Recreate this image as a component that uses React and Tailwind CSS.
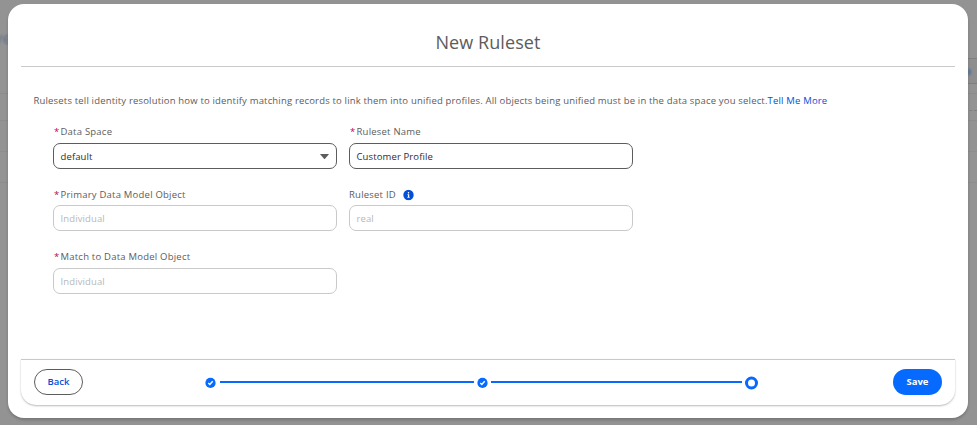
import React from "react";

const CheckDot = () => (
  <svg className="size-[11px] shrink-0" viewBox="0 0 11 11">
    <circle cx="5.5" cy="5.9" r="5.1" fill="#066afe" />
    <path d="M3.3 6l1.5 1.5 2.9-3.3" fill="none" stroke="#fff" strokeWidth="1.5" />
  </svg>
);

const InfoIcon = () => (
  <svg className="ml-[7.5px] size-[11px] shrink-0 translate-y-[0.5px]" viewBox="0 0 11 11">
    <circle cx="5.5" cy="5.5" r="5.2" fill="#0250d9" />
    <rect x="4.8" y="2.6" width="1.4" height="1.3" rx=".4" fill="#fff" />
    <path d="M4.5 4.8h1.7v2.6h.5v.8H4.4v-.8h.5V5.6h-.4z" fill="#fff" />
  </svg>
);

function Field({ label, value, required, select, disabled, info }) {
  return (
    <div className="flex w-[284px] flex-col">
      <div
        className={`flex h-[17px] items-center text-[9.5px] leading-[14px] tracking-[0.22px] text-[#5c5c5c] ${
          disabled ? "pt-[1.5px]" : ""
        }`}
      >
        {required && <span className="ml-[1px] w-[6.5px] text-[#b60554]">*</span>}
        <span>{label}</span>
        {info && <InfoIcon />}
      </div>
      <div
        className={`mt-[3px] flex h-[26px] items-center justify-between rounded-[7px] border pr-[7px] pl-[6.5px] text-[9.5px] leading-[14px] tracking-[0.12px] ${
          disabled ? "border-[#c9c9c9] text-[#b8b8b8]" : "border-[#5c5c5c] text-[#2e2e2e]"
        }`}
      >
        <span className="pt-[2px]">{value}</span>
        {select && (
          <svg className="h-[5px] w-[9px]" viewBox="0 0 9 5">
            <path d="M.6 0h7.8q.8 0 .3.6L5 4.7q-.5.5-1 0L.3.6Q-.2 0 .6 0z" fill="#5c5c5c" />
          </svg>
        )}
      </div>
    </div>
  );
}

export default function App() {
  return (
    <div className="relative h-[425px] w-[977px] overflow-hidden bg-[#939393] font-['Open_Sans','Noto_Sans',sans-serif]">
      {/* Dimmed page behind the dialog */}
      <div className="absolute inset-x-0 top-[93px] h-[90px] border-y border-[#8c8c8c]">
        <div className="mt-[26px] h-[32px] border-y border-[#8c8c8c]" />
      </div>
      <span className="absolute top-[26px] -left-[6px] text-[17px] leading-6 text-[#637286] blur-[1px]">ve</span>
      <div className="absolute top-[58px] right-0 h-[26px] w-5 border-y border-[#7f7f7f] bg-[#8e8e8e]" />
      <div className="absolute top-[69px] right-[6px] h-[6px] w-[3px] bg-[#5a749e] blur-[1px]" />
      <div className="absolute top-[110px] right-0 w-3 border-t border-dashed border-[#7f7f7f]" />

      <main className="relative mt-1 ml-2 flex h-[414px] w-[960px] flex-col rounded-[16px] bg-white px-[13px] pb-[13px] shadow-[0_2px_3px_rgba(0,0,0,0.2)]">
        <header className="flex h-[63px] shrink-0 items-center justify-center border-b border-[#c9c9c9] pt-[14px]">
          <h1 className="text-[18px] leading-6 tracking-[0.08px] text-[#5c5c5c]">New Ruleset</h1>
        </header>

        <section className="flex-1 px-[12.5px] pt-[26px]">
          <p className="h-[16px] text-[9.5px] leading-[15px] tracking-[0.175px] whitespace-nowrap text-[#5c5c5c]">
            <span>
              Rulesets tell identity resolution how to identify matching records to link them into unified profiles. All
              objects being unified must be in the data space you select.
            </span>
            <a className="text-[#0250d9]">Tell Me More</a>
          </p>
          <div className="mt-[14px] ml-[19.5px] grid w-[580px] grid-cols-[284px_284px] gap-x-[12px] gap-y-[16.3px]">
            <Field label="Data Space" value="default" required select />
            <Field label="Ruleset Name" value="Customer Profile" required />
            <Field label="Primary Data Model Object" value="Individual" required disabled />
            <Field label="Ruleset ID" value="real" disabled info />
            <Field label="Match to Data Model Object" value="Individual" required disabled />
          </div>
        </section>

        <footer className="flex h-[46px] shrink-0 items-center rounded-b-[15px] border-t border-[#c9c9c9] px-[13px] pb-px shadow-[0_1px_2px_rgba(0,0,0,0.28)]">
          <button className="h-[26px] w-[49px] rounded-full border border-[#5c5c5c] pt-px text-[9.5px] font-semibold text-[#0250d9]">
            Back
          </button>
          <div className="ml-[122px] flex items-center">
            <CheckDot />
            <div className="mr-[3px] ml-[4px] h-[2px] w-[254px] bg-[#066afe]" />
            <CheckDot />
            <div className="mx-[3px] h-[2px] w-[251px] bg-[#066afe]" />
            <div className="size-[13px] translate-y-[0.5px] rounded-full border-3 border-[#066afe]" />
          </div>
          <button className="ml-auto h-[26px] w-[49px] rounded-full bg-[#066afe] pt-px text-[9.5px] font-bold text-white">
            Save
          </button>
        </footer>
      </main>
    </div>
  );
}
